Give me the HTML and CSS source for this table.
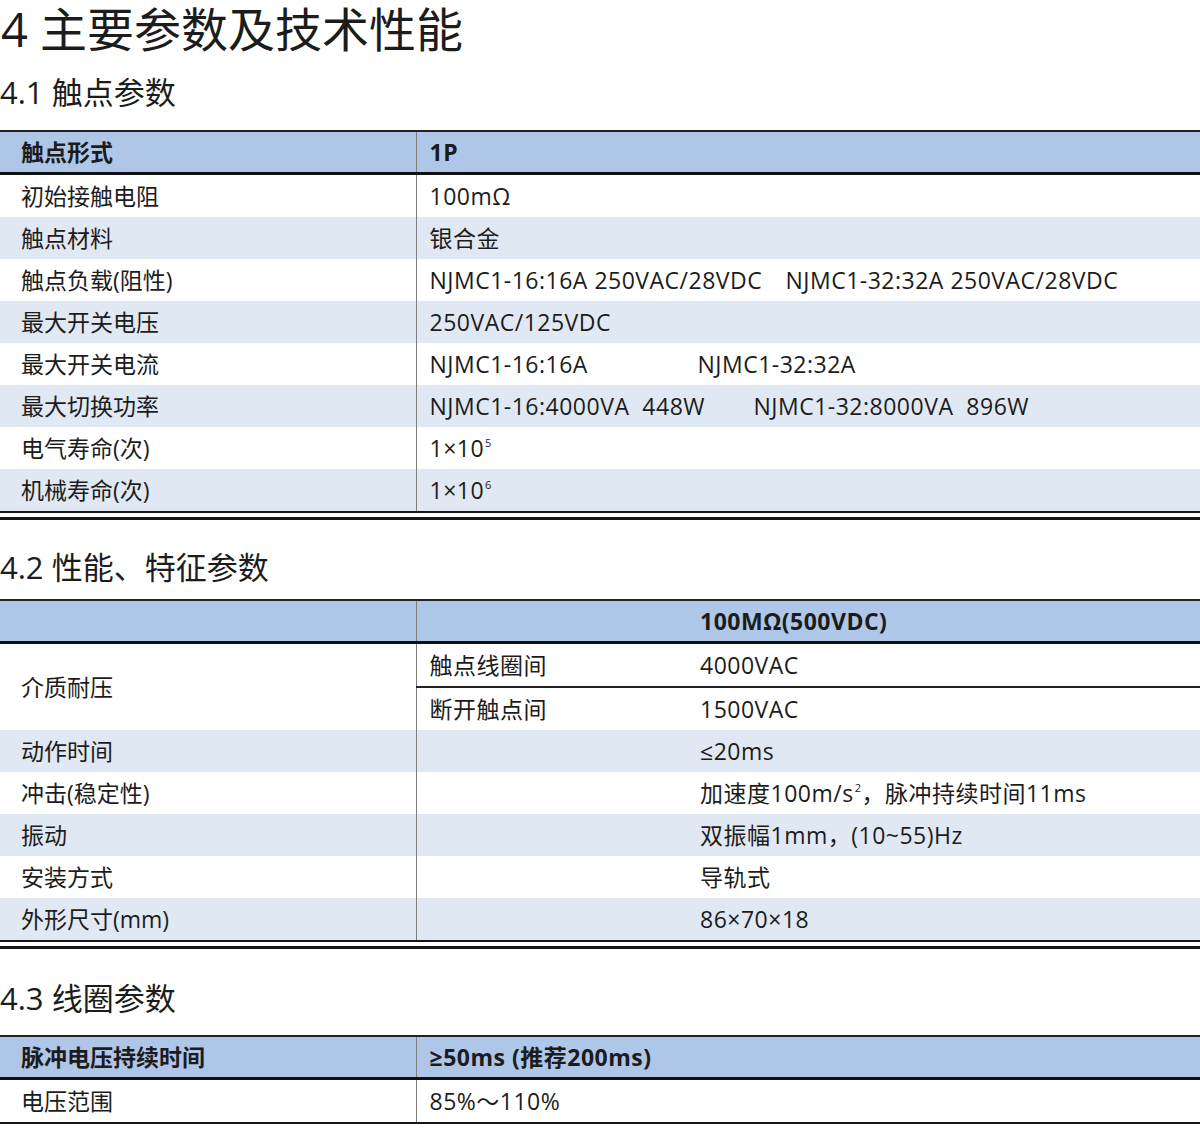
FILE: index.html
```html
<!DOCTYPE html>
<html lang="zh-CN">
<head>
<meta charset="utf-8">
<title>主要参数及技术性能</title>
<link rel="stylesheet" href="styles.css">
</head>
<body>
<div class="page">
  <h1 class="title">4 主要参数及技术性能</h1>

  <h2 class="sub s1">4.1 触点参数</h2>
  <table class="spec t1">
    <colgroup><col class="c1"><col></colgroup>
    <tr class="head"><th>触点形式</th><th class="v">1P</th></tr>
    <tr><td>初始接触电阻</td><td class="v">100mΩ</td></tr>
    <tr class="alt"><td>触点材料</td><td class="v">银合金</td></tr>
    <tr><td>触点负载(阻性)</td><td class="v"><span class="w356">NJMC1-16:16A 250VAC/28VDC</span>NJMC1-32:32A 250VAC/28VDC</td></tr>
    <tr class="alt"><td>最大开关电压</td><td class="v">250VAC/125VDC</td></tr>
    <tr><td>最大开关电流</td><td class="v"><span class="w268">NJMC1-16:16A</span>NJMC1-32:32A</td></tr>
    <tr class="alt"><td>最大切换功率</td><td class="v"><span class="w324">NJMC1-16:4000VA&nbsp; 448W</span>NJMC1-32:8000VA&nbsp; 896W</td></tr>
    <tr><td>电气寿命(次)</td><td class="v">1×10<sup class="sp">5</sup></td></tr>
    <tr class="alt"><td>机械寿命(次)</td><td class="v">1×10<sup class="sp">6</sup></td></tr>
  </table>
  <div class="dbl"></div>

  <h2 class="sub s2">4.2 性能、特征参数</h2>
  <table class="spec t2">
    <colgroup><col class="c1"><col class="c2"><col></colgroup>
    <tr class="head"><th></th><th class="v"></th><th class="v3">100MΩ(500VDC)</th></tr>
    <tr class="split"><td rowspan="2">介质耐压</td><td class="v">触点线圈间</td><td class="v3">4000VAC</td></tr>
    <tr><td class="v">断开触点间</td><td class="v3">1500VAC</td></tr>
    <tr class="alt"><td>动作时间</td><td class="v"></td><td class="v3">≤20ms</td></tr>
    <tr><td>冲击(稳定性)</td><td class="v"></td><td class="v3">加速度100m/s<sup class="sp">2</sup>，脉冲持续时间11ms</td></tr>
    <tr class="alt"><td>振动</td><td class="v"></td><td class="v3">双振幅1mm，(10~55)Hz</td></tr>
    <tr><td>安装方式</td><td class="v"></td><td class="v3">导轨式</td></tr>
    <tr class="alt"><td>外形尺寸(mm)</td><td class="v"></td><td class="v3">86×70×18</td></tr>
  </table>
  <div class="dbl"></div>

  <h2 class="sub s3">4.3 线圈参数</h2>
  <table class="spec t3">
    <colgroup><col class="c1"><col></colgroup>
    <tr class="head"><th>脉冲电压持续时间</th><th class="v">≥50ms (推荐200ms)</th></tr>
    <tr><td>电压范围</td><td class="v">85%～110%</td></tr>
  </table>
</div>
</body>
</html>
```

FILE: styles.css
```css
html, body {
  margin: 0;
  padding: 0;
  background: #ffffff;
}

body {
  font-family: "Open Sans", "Noto Sans CJK SC", sans-serif;
  color: #1c1c1c;
}

.page {
  width: 1200px;
}

.title {
  margin: 0;
  padding-left: 1px;
  font-size: 47px;
  line-height: 58px;
  font-weight: 400;
}

.sub {
  margin: 0;
  font-size: 31px;
  line-height: 40px;
  font-weight: 400;
}

.s1 { margin-top: 14px; margin-bottom: 18px; }
.s2 { margin-top: 27px; margin-bottom: 12px; }
.s3 { margin-top: 29px; margin-bottom: 17px; }

.spec {
  width: 1200px;
  border-collapse: collapse;
  table-layout: fixed;
  font-size: 23px;
  border-bottom: 2px solid #151515;
}

.spec .c1 { width: 416px; }
.spec .c2 { width: 270px; }

.spec th,
.spec td {
  height: 42px;
  padding: 0 0 0 21px;
  text-align: left;
  vertical-align: middle;
  white-space: nowrap;
  line-height: 30px;
}

.spec th {
  font-weight: 700;
}

.spec .v {
  padding-left: 13px;
  border-left: 1px solid #7d7d7d;
  letter-spacing: 0.5px;
}

.spec .v3 {
  padding-left: 14px;
  letter-spacing: 0.5px;
}

.spec .head {
  background: #aec6e8;
  border-top: 2px solid #222222;
  border-bottom: 3px solid #111111;
}

.spec .head th {
  height: 40px;
}

.spec .alt {
  background: #e0e8f4;
}

.spec .split .v,
.spec .split .v3 {
  border-bottom: 2px solid #222222;
}

.dbl {
  height: 3px;
  margin-top: 4px;
  background: #151515;
}

.sp {
  font-size: 11px;
  vertical-align: 10px;
  line-height: 0;
  margin-left: 1px;
}

.w268 { display: inline-block; width: 268px; }
.w324 { display: inline-block; width: 324px; }
.w356 { display: inline-block; width: 356px; }
```
